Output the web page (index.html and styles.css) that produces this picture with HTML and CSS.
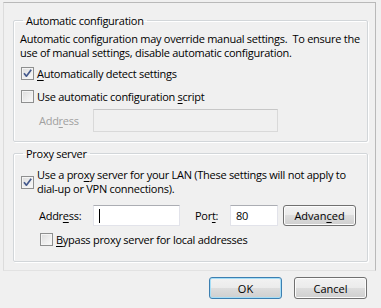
FILE: index.html
```html
<!DOCTYPE html>
<html lang="en">
<head>
<meta charset="UTF-8" />
<title>Local Area Network (LAN) Settings</title>
<link rel="stylesheet" href="styles.css">
</head>
<body>

<div class="dialog">

  <div class="frame">

    <!-- Automatic configuration -->
    <fieldset class="group group-auto">
      <legend>Automatic configuration</legend>
      <p class="desc">Automatic configuration may override manual settings.&nbsp; To ensure the<br>use of manual settings, disable automatic configuration.</p>

      <div class="check-row first">
        <span class="box checked"><svg width="13" height="13" viewBox="0 0 13 13"><path d="M3 6.2 L5.4 9.2 L10.2 2.8" fill="none" stroke="#44598c" stroke-width="1.7" stroke-linejoin="round"/></svg></span>
        <span class="label"><u>A</u>utomatically detect settings</span>
      </div>

      <div class="check-row second">
        <span class="box"></span>
        <span class="label">Use automatic configuration <u>s</u>cript</span>
      </div>

      <div class="field-row script-row">
        <span class="field-label disabled">Add<u>r</u>ess</span>
        <div class="textbox disabled script-box"></div>
      </div>
    </fieldset>

    <!-- Proxy server -->
    <fieldset class="group group-proxy">
      <legend>Proxy server</legend>

      <div class="check-row two-line">
        <span class="box checked"><svg width="13" height="13" viewBox="0 0 13 13"><path d="M3 6.2 L5.4 9.2 L10.2 2.8" fill="none" stroke="#44598c" stroke-width="1.7" stroke-linejoin="round"/></svg></span>
        <span class="label">Use a pro<u>x</u>y server for your LAN (These settings will not apply to<br>dial-up or VPN connections).</span>
      </div>

      <div class="field-row proxy-row">
        <span class="field-label">Addr<u>e</u>ss:</span>
        <div class="textbox addr-box"><span class="caret"></span></div>
        <span class="port-label">Por<u>t</u>:</span>
        <div class="textbox port-box">80</div>
        <button class="btn adv-btn">Advan<u>c</u>ed</button>
      </div>

      <div class="check-row bypass">
        <span class="box"></span>
        <span class="label"><u>B</u>ypass proxy server for local addresses</span>
      </div>
    </fieldset>

  </div>

  <div class="actions">
    <button class="btn default">OK</button>
    <button class="btn">Cancel</button>
  </div>

</div>

</body>
</html>
```

FILE: styles.css
```css
body {
  margin: 0;
  background: #f0f0f0;
  font-family: 'Segoe UI', 'Open Sans', sans-serif;
  font-size: 11px;
  letter-spacing: -0.27px;
  color: #000;
}
u {
  text-decoration-thickness: 1px;
  text-underline-offset: 2px;
}
.dialog {
  width: 381px;
  height: 308px;
  overflow: hidden;
}
.frame {
  margin: 2px 0 0 3px;
  width: 373px;
  box-sizing: border-box;
  border: 1px solid #b9b9b9;
  border-left-color: #dcdcdc;
  border-bottom-color: #e2e2e2;
  padding: 0 0 8px 9px;
}
/* Group boxes */
.group {
  width: 355px;
  box-sizing: border-box;
  margin: 0;
  padding: 4px 6px 9px 6px;
  border: 1px solid #d2d6d9;
  border-radius: 2px;
  box-shadow: inset 1px 1px 0 #fff, 1px 1px 0 #fff;
  min-inline-size: 0;
  white-space: nowrap;
}
.group-auto {
  margin-top: 10px;
}
.group-proxy {
  margin-top: 4px;
  padding-top: 7px;
  padding-bottom: 15px;
}
.group legend {
  margin-left: 3px;
  padding: 0 3px;
  line-height: 15px;
}
.desc {
  margin: 0;
  line-height: 14px;
}
/* Checkboxes */
.check-row {
  display: flex;
  align-items: center;
  gap: 3px;
  padding-left: 1px;
  height: 13px;
  line-height: 13px;
}
.check-row.first { margin-top: 7px; }
.check-row.second { margin-top: 10px; }
.check-row.two-line {
  height: 28px;
  line-height: 14px;
}
.check-row.bypass {
  margin-top: 7px;
  padding-left: 20px;
}
.box {
  flex: none;
  width: 13px;
  height: 13px;
  box-sizing: border-box;
  border: 1px solid #8e8f8f;
  background: linear-gradient(135deg, #dcdcdc, #fbfbfb);
  box-shadow: inset 0 0 0 1px #f4f4f4;
  position: relative;
}
.box svg {
  position: absolute;
  left: -1px;
  top: -1px;
}
/* Text fields */
.field-row {
  display: flex;
  align-items: center;
  padding-left: 19px;
}
.script-row { margin-top: 6px; }
.proxy-row { margin-top: 9px; }
.field-label {
  width: 54px;
  flex: none;
}
.field-label.disabled { color: #a0a0a0; }
.textbox {
  box-sizing: border-box;
  height: 21px;
  background: #fff;
  border: 1px solid #e2e3ea;
  border-top-color: #abadb3;
  display: flex;
  align-items: center;
  padding-left: 5px;
}
.textbox.disabled {
  background: #f0f0f0;
  border-color: #d9d9d9;
  border-top-color: #c7c7c7;
}
.script-box {
  width: 185px;
  height: 23px;
}
.addr-box { width: 87px; }
.caret {
  width: 1px;
  height: 14px;
  background: #000;
}
.port-label {
  margin-left: 15px;
  width: 35px;
}
.port-box { width: 48px; }
/* Buttons */
.btn {
  font: inherit;
  color: #000;
  width: 73px;
  height: 22px;
  padding: 0;
  border: 1px solid #707070;
  border-radius: 3px;
  background: linear-gradient(#f2f2f2, #ebebeb 50%, #dddddd 50%, #cfcfcf);
  box-shadow: inset 0 0 0 1px #fcfcfc;
}
.btn.default {
  border-color: #3c7fb1;
  box-shadow: inset 0 0 0 1px #a6def7;
}
.adv-btn {
  margin-left: 5px;
  height: 21px;
}
.actions {
  display: flex;
  justify-content: flex-end;
  gap: 12px;
  margin-top: 6px;
  padding-right: 14px;
}
```
